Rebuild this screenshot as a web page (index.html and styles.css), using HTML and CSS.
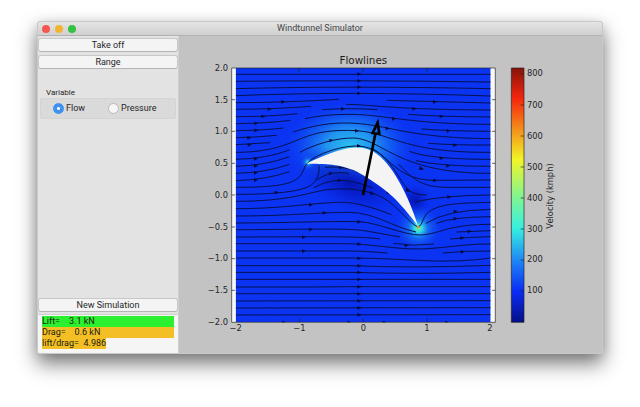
FILE: index.html
```html
<!DOCTYPE html>
<html lang="en">
<head>
<meta charset="utf-8">
<title>Windtunnel Simulator</title>
<link rel="stylesheet" href="styles.css">
</head>
<body>
<main class="window">
  <header class="titlebar">
    <div class="lights">
      <button class="light close" aria-label="Close"></button>
      <button class="light minimize" aria-label="Minimize"></button>
      <button class="light zoom" aria-label="Zoom"></button>
    </div>
    <h1 class="title">Windtunnel Simulator</h1>
  </header>
  <div class="content">
    <aside class="sidebar">
      <button class="button">Take off</button>
      <button class="button">Range</button>
      <fieldset class="variable">
        <legend class="legend">Variable</legend>
        <div class="options">
          <label class="option"><input class="radio" type="radio" name="variable" checked>Flow</label>
          <label class="option"><input class="radio" type="radio" name="variable">Pressure</label>
        </div>
      </fieldset>
      <button class="button start">New Simulation</button>
      <div class="results">
        <div class="result good">Lift=    3.1 kN</div>
        <div class="result warn">Drag=    0.6 kN</div>
        <div class="result warn fit">lift/drag=  4.986</div>
      </div>
    </aside>
    <svg class="chart" viewBox="537 108 1269 951" role="img" aria-label="Flowlines around an airfoil">
      <defs>
        <radialGradient id="fast"><stop offset="0" stop-color="#2cc4ee"/><stop offset=".35" stop-color="#25a5f0" stop-opacity=".85"/><stop offset=".65" stop-color="#1670f2" stop-opacity=".5"/><stop offset="1" stop-color="#0b33f2" stop-opacity="0"/></radialGradient>
        <radialGradient id="slow"><stop offset="0" stop-color="#0414b0"/><stop offset=".45" stop-color="#061cc8" stop-opacity=".6"/><stop offset="1" stop-color="#0b33f2" stop-opacity="0"/></radialGradient>
        <radialGradient id="tip"><stop offset="0" stop-color="#7cf08a"/><stop offset=".16" stop-color="#30d8e6"/><stop offset=".4" stop-color="#1d8cf2" stop-opacity=".6"/><stop offset="1" stop-color="#0b33f2" stop-opacity="0"/></radialGradient>
        <linearGradient id="jet" x1="0" y1="0" x2="0" y2="1">
          <stop offset="0" stop-color="#86130a"/><stop offset=".12" stop-color="#f5260e"/><stop offset=".36" stop-color="#f2f527"/><stop offset=".5" stop-color="#86f58c"/><stop offset=".63" stop-color="#36f0e0"/><stop offset=".76" stop-color="#1d84f5"/><stop offset=".88" stop-color="#0a2cf5"/><stop offset="1" stop-color="#050f86"/>
        </linearGradient>
        <clipPath id="field"><path d="M707 204H1472V967H707z"/></clipPath>
      </defs>
      <path class="paper" d="M695 204H1486V967H695z"/>
      <g clip-path="url(#field)">
        <path class="air" d="M707 204H1472V967H707z"/>
        <ellipse cx="1050" cy="440" rx="205" ry="145" fill="url(#fast)"/>
        <ellipse cx="1050" cy="550" rx="190" ry="90" fill="url(#slow)" transform="rotate(22 1050 550)"/>
        <ellipse cx="1245" cy="602" rx="55" ry="60" fill="url(#slow)"/>
        <circle cx="924" cy="487" r="24" fill="url(#tip)"/>
        <circle cx="1255" cy="685" r="75" fill="url(#tip)"/>
        <g class="stream">
          <path d="M707 223H1472M707 244Q1050 240 1472 246M707 266Q1040 257 1472 266M707 287Q1050 273 1472 288M707 308Q850 308 1016 298M1162 301L1472 309M707 328Q830 327 933 319M1038 313C1120 314 1180 329 1472 330M967 329Q1040 323 1132 329M707 350Q810 350 892 341M915 356Q970 343 1050 343C1150 343 1230 373 1472 373M1224 343Q1310 350 1472 351"/>
          <path d="M707 371Q800 370 871 361M880 396C940 375 1000 368 1040 369C1160 370 1210 414 1472 416M1265 387Q1340 393 1472 394M707 392Q790 391 851 384M707 413Q770 412 830 406M707 434L810 428"/>
          <path d="M707 457C850 457 880 415 960 398C1010 388 1080 388 1130 402C1210 426 1270 458 1472 457M1285 430Q1370 436 1472 435M1228 454Q1290 478 1472 478M1248 482Q1320 499 1472 499"/>
          <path d="M900 457C940 434 1010 413 1060 414C1150 417 1190 521 1472 520M707 562C835 562 885 552 903 524C917 502 912 493 940 475C970 457 1025 437 1075 438C1170 444 1170 541 1305 541L1472 540M1195 492C1240 536 1260 562 1345 562H1472M1120 447C1185 485 1205 565 1240 579Q1258 586 1280 585M1248 605Q1330 586 1472 585"/>
          <path d="M707 478Q800 476 868 450M707 499Q800 496 868 470M707 520Q800 518 868 493M707 542Q800 539 868 515M707 583C840 583 900 573 930 558C953 542 959 519 957 497"/>
          <path d="M707 604C880 604 930 574 990 568C1065 562 1125 575 1165 603C1210 639 1240 680 1255 680C1270 677 1265 645 1295 630C1330 610 1390 609 1472 607M707 626C860 626 940 607 1030 607Q1080 607 1175 644M707 648C860 648 960 637 1050 637C1130 640 1175 680 1248 696M707 669C860 669 950 663 1080 665C1140 670 1210 705 1260 705C1320 703 1340 673 1472 673"/>
          <path d="M942 563Q980 542 1020 541T1118 564M950 540Q980 518 1020 518L1047 520M975 502Q1010 498 1055 508Q1120 530 1165 575M1278 670Q1340 630 1472 628M1310 670Q1355 651 1472 650M1370 696L1472 692M707 689C900 689 1040 683 1100 693Q1160 704 1200 711M707 711C900 711 1080 707 1140 717M1350 717Q1410 711 1472 710M1180 730Q1240 740 1302 732M1328 759Q1400 752 1472 753"/>
          <path d="M707 731H1030C1110 731 1180 747 1250 747S1390 731 1472 732M707 753H1020Q1080 752 1162 759M707 774H1050Q1120 774 1250 781T1472 774M707 797H1050Q1250 805 1472 796M707 817H1050Q1250 823 1472 817M707 838H1472M707 861H936L1050 860H1472M707 881H1472M707 903L1472 902M707 924L1472 923M707 945L1472 944"/>
        </g>
        <path class="heads" d="M856 305l-12-5v11zM815 327l-12-5v11zM796 349l-12-5v11zM775 370l-12-5v11zM775 391l-12-5v11zM754 413l-12-5v11zM755 434l-12-5v11zM774 476l-12-5v11zM774 497l-12-5v11zM774 518l-12-5v11zM774 540l-12-5v11zM836 577l-12-5v11zM939 614l-12-5v11zM980 638l-12-5v11zM939 688l-12-5v11zM918 711l-12-5v11zM918 753l-12-5v11zM1084 222l-12-5v11zM1084 242l-12-5v11zM1084 261l-12-5v11zM1084 280l-12-5v11zM1035 326l-12-5v11zM1311 305l-12-5v11zM1249 326l-12-5v11zM1331 349l-12-5v11zM1188 356l-12-5v11zM1169 386l-12-7v11zM1352 392l-12-5v11zM1077 392l-12-5v11zM1372 435l-12-5v11zM1331 475l-12-6v11zM1351 497l-12-5v11zM1272 508l-13-10-1 13zM1312 541l-12-5v11zM1231 575l-12-11-3 10zM1354 590l-12-4v11zM1373 633l-12-4v11zM1373 655l-12-4v11zM1415 694l-12-5v11zM1393 713l-12-4v11zM999 419l-12-2 3 10zM1083 438l-12-6v11zM998 519l-12-4 3 11zM1025 541l-12-5v11zM1030 503l-12-6v11zM1123 583l-12-10v12zM1172 579l-13-8 2 11zM1084 665l-12-5v11zM1084 732l-12-5v11zM1226 736l-12-5v11zM1394 755l-12-5v11zM1084 775l-12-5v11zM1084 797l-12-5v11zM1084 817l-12-5v11zM1084 838l-12-5v11zM1084 860l-12-5v11zM1084 881l-12-5v11zM1084 902l-12-5v11zM1084 923l-12-5v11zM1084 944l-12-5v11zM858 967l-12-5v11zM1054 967l-12-5v11zM1160 967l-12-5v11zM1347 967l-12-5v11z"/>
      </g>
      <path class="wing" d="M920 491C970 465 1020 446 1060 443C1085 441 1105 447 1120 455C1175 485 1225 585 1255 680C1225 640 1205 617 1180 592C1150 563 1090 523 1060 510C1020 495 1000 492 920 491Z"/>
      <circle cx="1255" cy="681" r="4" fill="#e08a20"/>
      <path class="force" d="M1089 585L1126 402M1133 368L1118 399L1138 402Z"/>
      <path class="frame" d="M695 204H1486V967H695zM898 204v12M1090 204v12M1281 204v12M898 967v-12M1090 967v-12M1281 967v-12M695 299h10M695 394h10M695 490h10M695 585h10M695 681h10M695 776h10M695 871h10M1486 299h-10M1486 394h-10M1486 490h-10M1486 585h-10M1486 681h-10M1486 776h-10M1486 871h-10"/>
      <path class="frame" fill="url(#jet)" d="M1534 204H1572V967H1534z"/>
      <path class="frame" d="M1572 222h-10M1572 315h-10M1572 408h-10M1572 501h-10M1572 594h-10M1572 687h-10M1572 780h-10M1572 873h-10"/>
      <text class="heading" x="1090" y="191">Flowlines</text>
      <g class="ticks end">
        <text x="684" y="212">2.0</text><text x="684" y="308">1.5</text><text x="684" y="403">1.0</text><text x="684" y="498">0.5</text><text x="684" y="594">0.0</text><text x="684" y="689">−0.5</text><text x="684" y="784">−1.0</text><text x="684" y="880">−1.5</text><text x="684" y="975">−2.0</text>
      </g>
      <g class="ticks middle">
        <text x="707" y="994">−2</text><text x="898" y="994">−1</text><text x="1090" y="994">0</text><text x="1281" y="994">1</text><text x="1470" y="994">2</text>
        <text transform="translate(1658 588) rotate(-90)">Velocity (kmph)</text>
      </g>
      <g class="ticks">
        <text x="1581" y="229">800</text><text x="1581" y="323">700</text><text x="1581" y="416">600</text><text x="1581" y="509">500</text><text x="1581" y="602">400</text><text x="1581" y="695">300</text><text x="1581" y="787">200</text><text x="1581" y="880">100</text>
      </g>
    </svg>
  </div>
</main>
</body>
</html>
```
FILE: styles.css
```css
* { box-sizing: border-box; }

body {
  margin: 0;
  padding: 21px 37px 53px;
  background: #fff;
  color: #262626;
  font: 9px/11px Roboto, "Liberation Sans", sans-serif;
}

.window {
  overflow: hidden;
  border: 1px solid #c9c9c9;
  border-radius: 3px 3px 2px 2px;
  background: #c3c3c3;
  box-shadow: 0 10px 20px rgba(0, 0, 0, .5), 0 2px 12px rgba(0, 0, 0, .12);
}

.titlebar {
  display: grid;
  grid-template-columns: 1fr auto 1fr;
  align-items: center;
  height: 14px;
  padding: 0 4px;
  border-bottom: 1px solid #b2b2b2;
  background: linear-gradient(#e4e4e4, #d0d0d0);
}

.lights { display: flex; gap: 5px; }

.light {
  width: 8px;
  height: 8px;
  padding: 0;
  border: 0;
  border-radius: 50%;
}

.close { background: #f4574f; }
.minimize { background: #f3b432; }
.zoom { background: #34c244; }

.title {
  margin: 0;
  color: #484848;
  font-size: 9px;
  font-weight: 400;
}

.content { display: flex; }

.sidebar {
  display: flex;
  flex: 0 0 25%;
  flex-direction: column;
  padding-top: 2px;
  border-right: 1px solid #cfcfcf;
  background: #e3e3e3;
}

.button {
  height: 14px;
  margin-bottom: 3px;
  padding: 0;
  border: 1px solid #c8c8c8;
  border-bottom-color: #b4b4b4;
  border-radius: 3px;
  background: #f4f4f4;
  color: inherit;
  font: inherit;
}

.variable {
  min-width: 0;
  margin: 15px 2px 0;
  padding: 0;
  border: 0;
}

.legend {
  padding: 0 6px;
  font-size: 8px;
}

.options {
  display: grid;
  grid-template-columns: 55px 1fr;
  align-items: center;
  height: 21px;
  padding-left: 12px;
  border: 1px solid #d4d4d4;
  border-radius: 2px;
  background: #dadada;
}

.option {
  display: flex;
  align-items: center;
  gap: 2px;
}

.radio {
  width: 11px;
  height: 11px;
  margin: 0;
  border: 1px solid #b8b8b8;
  border-radius: 50%;
  appearance: none;
  background: #f6f6f6;
}

.radio:checked {
  border-color: #3a8dee;
  background: radial-gradient(circle, #fff 1px, #3d93f3 2px);
}

.start { margin-top: auto; margin-bottom: 2px; }

.results {
  height: 39px;
  padding: 1px 4px;
  border-top: 1px solid #cfcfcf;
  background: #f5f5f5;
  color: #1c1c10;
}

.result { white-space: pre; line-height: 11px; }
.good { background: #2bf02f; }
.warn { background: #f3bf25; }
.fit { width: fit-content; }

.chart {
  display: block;
  flex: 1;
  min-width: 0;
  font-family: "DejaVu Sans", sans-serif;
}

.paper { fill: #f8f8f8; }
.air { fill: #0b33f2; }
.wing { fill: #f4f4f4; }
.stream { fill: none; stroke: #05124f; stroke-width: 3; }
.heads { fill: #030a38; }
.force { fill: none; stroke: #000; stroke-width: 8; }
.frame { fill: none; stroke: #222; stroke-width: 2; }
.frame[fill] { fill: url(#jet); }
.heading { fill: #1c1c1c; font-size: 31px; text-anchor: middle; }
.ticks { fill: #262626; font-size: 25px; }
.end { text-anchor: end; }
.middle { text-anchor: middle; }
```
